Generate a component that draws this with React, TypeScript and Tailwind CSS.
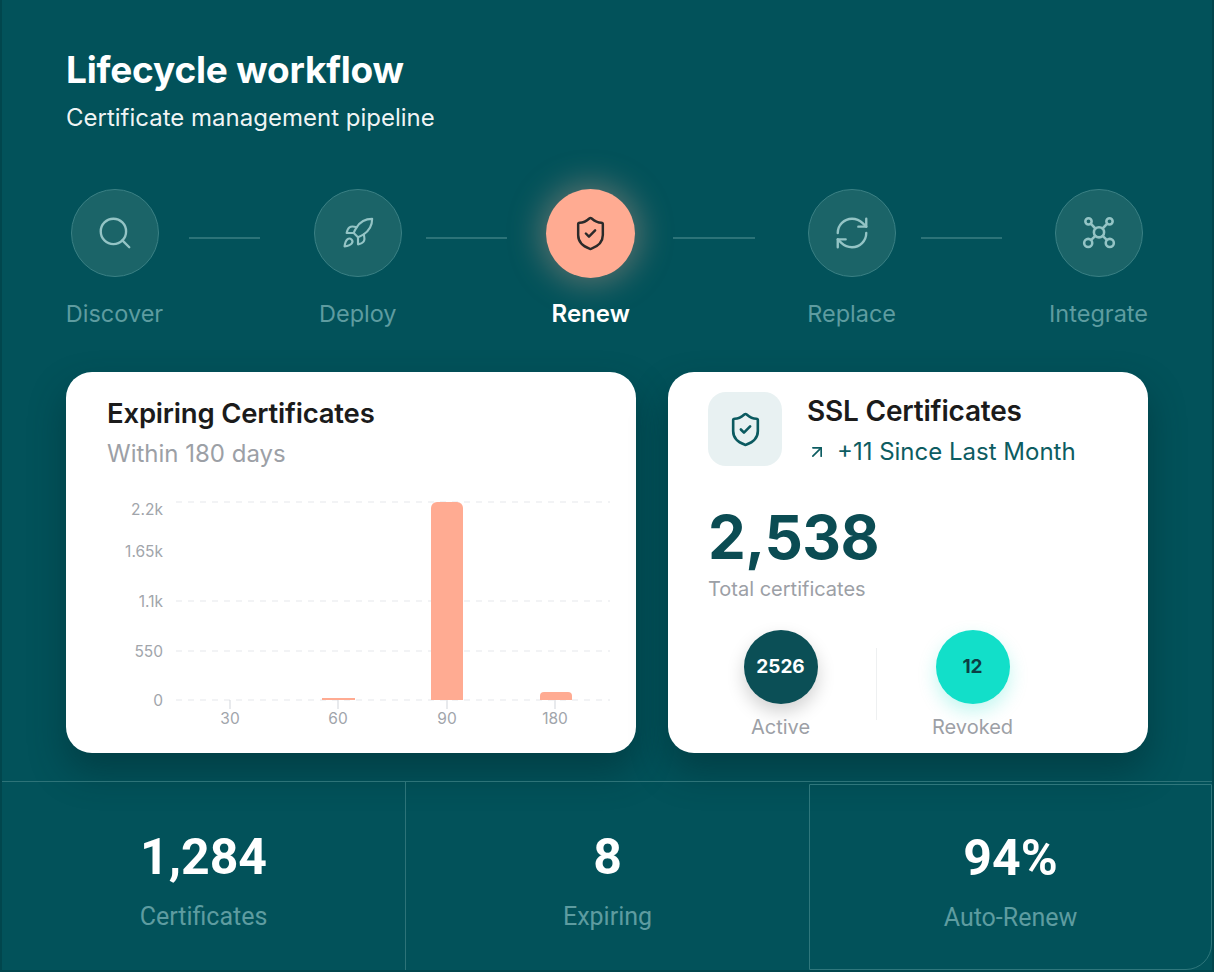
import React from "react";
import { Search, Rocket, ShieldCheck, RefreshCw, ArrowUpRight } from "lucide-react";

const IntegrateIcon = ({ className }: { className?: string }) => (
  <svg viewBox="0 0 24 24" className={className} fill="none" stroke="currentColor" strokeWidth={1.7} strokeLinecap="round" strokeLinejoin="round">
    <circle cx="12" cy="11.5" r="3.4" />
    <circle cx="5" cy="4.2" r="2.1" />
    <circle cx="19" cy="4.2" r="2.1" />
    <circle cx="4.8" cy="18.6" r="2.7" />
    <circle cx="19.2" cy="18.6" r="2.7" />
    <path d="M6.5 5.8 9.6 9" />
    <path d="M17.5 5.8 14.4 9" />
    <path d="M6.8 16.6 9.6 13.9" />
    <path d="M17.2 16.6 14.4 13.9" />
  </svg>
);

const Chart = () => {
  const yTicks = [
    { label: "2.2k", y: 29, line: 22 },
    { label: "1.65k", y: 71, line: null },
    { label: "1.1k", y: 121, line: 121 },
    { label: "550", y: 171, line: 171 },
    { label: "0", y: 220, line: 220 },
  ];
  const xs = [
    { label: "30", x: 130 },
    { label: "60", x: 238 },
    { label: "90", x: 347 },
    { label: "180", x: 455 },
  ];
  return (
    <svg width="520" height="250" viewBox="0 0 520 250" className="block">
      {yTicks.map((t) =>
        t.line !== null ? (
          <line key={"g" + t.label} x1="76" x2="510" y1={t.line} y2={t.line} stroke="#e5e7eb" strokeWidth="1" strokeDasharray="6 6" />
        ) : null
      )}
      {yTicks.map((t) => (
        <text key={t.label} x="63" y={t.y} textAnchor="end" dominantBaseline="central" fontSize="15.5" fill="#a1a5ab" fontFamily="Inter, sans-serif">
          {t.label}
        </text>
      ))}
      <rect x="222" y="218" width="33" height="2" fill="#ffab92" />
      <path d="M331 220 V28 a6 6 0 0 1 6 -6 H357 a6 6 0 0 1 6 6 V220 Z" fill="#ffab92" />
      <path d="M440 220 V216 a4 4 0 0 1 4 -4 H468 a4 4 0 0 1 4 4 V220 Z" fill="#ffab92" />
      {xs.map((t) => (
        <g key={t.label}>
          <line x1={t.x} x2={t.x} y1="220" y2="229" stroke="#d1d5db" strokeWidth="1" />
          <text x={t.x} y="238" textAnchor="middle" dominantBaseline="central" fontSize="15.5" fill="#a1a5ab" fontFamily="Inter, sans-serif">
            {t.label}
          </text>
        </g>
      ))}
    </svg>
  );
};

const StepCircle = ({ children, active }: { children: React.ReactNode; active?: boolean }) =>
  active ? (
    <div className="w-[89px] h-[89px] rounded-full bg-[#ffab92] flex items-center justify-center text-[#2a2a2a] shadow-[0_0_32px_6px_rgba(255,171,146,0.35)]">
      {children}
    </div>
  ) : (
    <div className="w-[88px] h-[88px] rounded-full bg-[#1b6468] border border-[#3a8084] flex items-center justify-center text-[#94c4c5]">
      {children}
    </div>
  );

export default function App() {
  return (
    <div
      className="w-[1214px] h-[972px] bg-[#02525a] overflow-hidden flex flex-col border-x-2 border-b-2 border-[#01464d]"
      style={{ fontFamily: "Inter, 'Noto Sans', sans-serif" }}
    >
      <div className="pl-[64px] pr-[64px] pt-[48px]">
        <h1 className="text-[37px] leading-[44px] font-bold text-white tracking-[-0.2px]">Lifecycle workflow</h1>
        <p className="mt-[12px] text-[24px] leading-[28px] text-white/95">Certificate management pipeline</p>

        {/* stepper */}
        <div className="mt-[57px] flex items-start">
          <div className="w-[97px] flex flex-col items-center">
            <StepCircle>
              <Search className="w-[38px] h-[38px]" strokeWidth={1.5} />
            </StepCircle>
            <span className="mt-[23px] text-[23.5px] leading-[28px] text-[#5e9ca0]">Discover</span>
          </div>
          <div className="ml-[26px] w-[73px] h-[2px] mt-[48px] bg-[#2c7378]" />
          <div className="ml-[54px] w-[88px] flex flex-col items-center">
            <StepCircle>
              <Rocket className="w-[34px] h-[34px]" strokeWidth={1.5} />
            </StepCircle>
            <span className="mt-[23px] text-[23.5px] leading-[28px] text-[#5e9ca0]">Deploy</span>
          </div>
          <div className="ml-[24px] w-[84px] h-[2px] mt-[48px] bg-[#2c7378]" />
          <div className="ml-[39px] w-[89px] flex flex-col items-center">
            <StepCircle active>
              <ShieldCheck className="w-[37px] h-[37px]" strokeWidth={1.6} />
            </StepCircle>
            <span className="mt-[22px] text-[24px] leading-[28px] font-semibold text-white">Renew</span>
          </div>
          <div className="ml-[38px] w-[84px] h-[2px] mt-[48px] bg-[#2c7378]" />
          <div className="ml-[53px] w-[88px] flex flex-col items-center">
            <StepCircle>
              <RefreshCw className="w-[38px] h-[38px]" strokeWidth={1.5} />
            </StepCircle>
            <span className="mt-[23px] text-[23.5px] leading-[28px] text-[#5e9ca0]">Replace</span>
          </div>
          <div className="ml-[25px] w-[84px] h-[2px] mt-[48px] bg-[#2c7378]" />
          <div className="ml-[47px] w-[102px] flex flex-col items-center">
            <StepCircle>
              <IntegrateIcon className="w-[36px] h-[36px]" />
            </StepCircle>
            <span className="mt-[23px] text-[23.5px] leading-[28px] text-[#5e9ca0]">Integrate</span>
          </div>
        </div>

        {/* cards */}
        <div className="mt-[44px] flex gap-[32px]">
          <div className="w-[570px] h-[381px] bg-white rounded-[26px] shadow-[0_18px_36px_rgba(0,40,44,0.45)] pt-[25px] pl-[41px]">
            <h2 className="text-[27.5px] leading-[32px] font-semibold text-[#1b1b1b] tracking-[-0.2px]">Expiring Certificates</h2>
            <p className="mt-[11px] text-[24px] leading-[28px] text-[#9ca0a6]">Within 180 days</p>
            <div className="mt-[12px] -ml-[7px]">
              <Chart />
            </div>
          </div>

          <div className="w-[480px] h-[381px] bg-white rounded-[26px] shadow-[0_18px_36px_rgba(0,40,44,0.45)] pt-[20px] pl-[40px]">
            <div className="flex">
              <div className="w-[74px] h-[74px] rounded-[18px] bg-[#e8f1f2] flex items-center justify-center text-[#0b5a60]">
                <ShieldCheck className="w-[37px] h-[37px]" strokeWidth={1.7} />
              </div>
              <div className="ml-[25px] pt-[3px]">
                <div className="text-[28px] leading-[32px] font-semibold text-[#1b1b1b] tracking-[-0.2px]">SSL Certificates</div>
                <div className="mt-[11px] flex items-center text-[24px] leading-[28px] text-[#0d5c61]">
                  <ArrowUpRight className="w-[20px] h-[20px]" strokeWidth={2} />
                  <span className="ml-[10px]">+11 Since Last Month</span>
                </div>
              </div>
            </div>
            <div className="mt-[41px] text-[60px] leading-[60px] font-bold text-[#0b4c53] tracking-[-0.5px]">2,538</div>
            <div className="mt-[10px] text-[20px] leading-[24px] text-[#9ca0a6]">Total certificates</div>
            <div className="mt-[29px] -ml-[23px] flex items-start">
              <div className="w-[191px] flex flex-col items-center">
                <div className="w-[74px] h-[74px] rounded-full bg-[#0b4f56] flex items-center justify-center text-white text-[19px] font-bold shadow-[0_8px_18px_rgba(0,0,0,0.18)]">
                  2526
                </div>
                <span className="mt-[11px] text-[20px] leading-[24px] text-[#9ca0a6]">Active</span>
              </div>
              <div className="w-px h-[72px] mt-[18px] bg-[#eef0f1]" />
              <div className="w-[191px] flex flex-col items-center">
                <div className="w-[74px] h-[74px] rounded-full bg-[#12dfc9] flex items-center justify-center text-[#0b3f45] text-[19px] font-bold shadow-[0_8px_18px_rgba(18,223,201,0.25)]">
                  12
                </div>
                <span className="mt-[11px] text-[20px] leading-[24px] text-[#9ca0a6]">Revoked</span>
              </div>
            </div>
          </div>
        </div>
      </div>

      {/* bottom stats */}
      <div className="mt-[28px] flex-1 border-t border-[#2d7378] grid grid-cols-[404px_403px_1fr]" style={{ fontFamily: "Roboto, Inter, sans-serif" }}>
        <div className="border-r border-[#2d7378] flex flex-col items-center pt-[47px]">
          <div className="text-[50px] leading-[56px] font-bold text-white">1,284</div>
          <div className="mt-[18px] text-[25px] leading-[28px] text-[#5e9ca0]">Certificates</div>
        </div>
        <div className="flex flex-col items-center pt-[47px]">
          <div className="text-[50px] leading-[56px] font-bold text-white">8</div>
          <div className="mt-[18px] text-[25px] leading-[28px] text-[#5e9ca0]">Expiring</div>
        </div>
        <div className="mt-[2px] border-[1.5px] border-[#2f777c] rounded-br-[26px] flex flex-col items-center pt-[45px]">
          <div className="text-[50px] leading-[56px] font-bold text-white">94%</div>
          <div className="mt-[18px] text-[25px] leading-[28px] text-[#5e9ca0]">Auto-Renew</div>
        </div>
      </div>
    </div>
  );
}
